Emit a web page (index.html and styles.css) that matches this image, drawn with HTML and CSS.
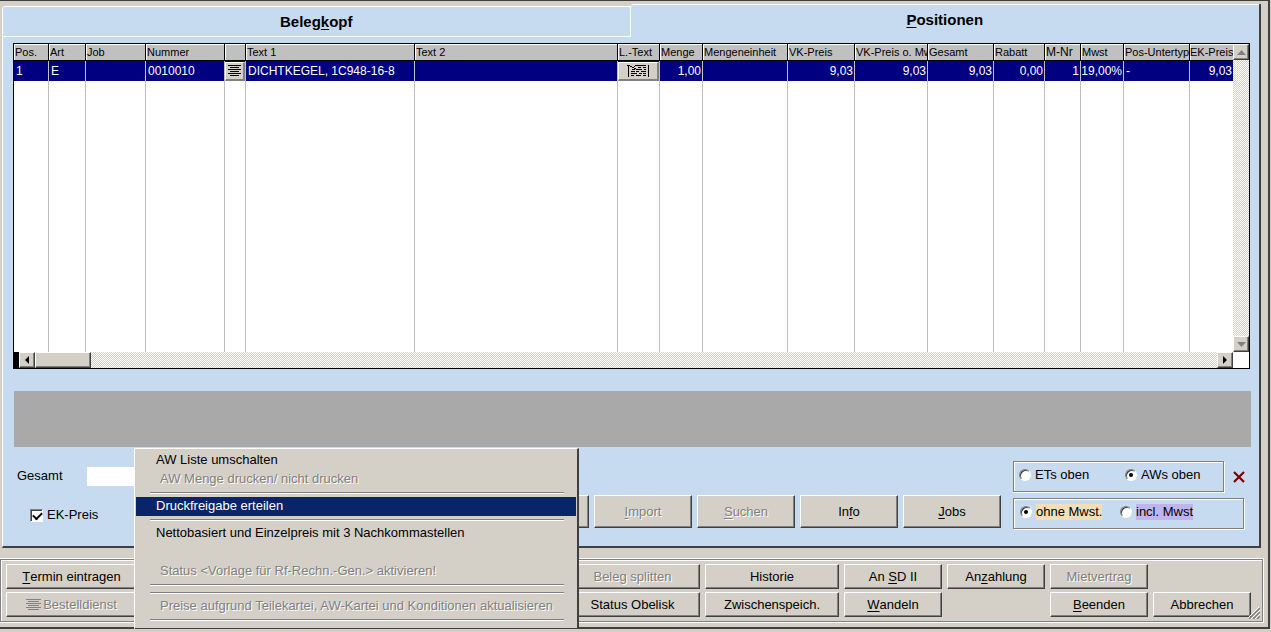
FILE: index.html
```html
<!DOCTYPE html>
<html lang="de">
<head>
<meta charset="utf-8">
<title>Positionen</title>
<link rel="stylesheet" href="styles.css">
</head>
<body>
<main class="window">
  <section class="panel">
    <div class="tabs" role="tablist">
      <button class="tab" role="tab">Beleg<u>k</u>opf</button>
      <button class="tab tab-active" role="tab" aria-selected="true"><u>P</u>ositionen</button>
    </div>
    <div class="panel-body">
      <div class="grid-frame">
        <div class="grid-main">
          <table class="grid">
            <colgroup>
              <col class="w35"><col class="w37"><col class="w60"><col class="w79"><col class="w21"><col class="w169"><col>
              <col class="w42"><col class="w43"><col class="w85"><col class="w67"><col class="w73"><col class="w66">
              <col class="w51"><col class="w36"><col class="w43"><col class="w66"><col class="w43">
            </colgroup>
            <thead>
              <tr><th>Pos.</th><th>Art</th><th>Job</th><th>Nummer</th><th></th><th>Text 1</th><th>Text 2</th><th>L.-Text</th><th>Menge</th><th>Mengeneinheit</th><th>VK-Preis</th><th>VK-Preis o. Mw</th><th>Gesamt</th><th>Rabatt</th><th class="wide">M-Nr</th><th>Mwst</th><th>Pos-Untertyp</th><th>EK-Preis</th></tr>
            </thead>
            <tbody>
              <tr class="selected">
                <td>1</td><td>E</td><td></td><td>0010010</td>
                <td class="icon-cell"><button class="cell-button" aria-label="Text"><svg width="15" height="13" viewBox="0 0 15 13" shape-rendering="crispEdges"><path d="M1 1.5h13M3 3.5h9M1 5.5h13M3 7.5h9M1 9.5h13M3 11.5h9" stroke="#000"/></svg></button></td>
                <td>DICHTKEGEL, 1C948-16-8</td><td></td>
                <td class="icon-cell"><button class="cell-button" aria-label="Langtext"><svg width="24" height="14" viewBox="0 0 24 14" shape-rendering="crispEdges"><path d="M1 1.5h3M2.500 1v12M22.500 1v12M4 2.500h2M6 3.500h2M8 4.500h2M9 1.500h11M8 2.500h1M12 3.500h3M17 3.500h3M6 5.500h3M10 5.500h6M18 5.500h2M5 7.500h4M10 7.500h3M15 7.500h5M5 9.500h6M13 9.500h3M17 9.500h3M5 11.500h3M10 11.500h5M17 11.500h3" stroke="#000"/></svg></button></td>
                <td class="num">1,00</td><td></td><td class="num">9,03</td><td class="num">9,03</td><td class="num">9,03</td><td class="num">0,00</td><td class="num">1</td><td class="num">19,00%</td><td>-</td><td class="num">9,03</td>
              </tr>
              <tr class="blank"><td></td><td></td><td></td><td></td><td></td><td></td><td></td><td></td><td></td><td></td><td></td><td></td><td></td><td></td><td></td><td></td><td></td><td></td></tr>
            </tbody>
          </table>
          <div class="scroll-v">
            <button class="arrow" aria-label="Nach oben"><svg width="9" height="5" viewBox="0 0 9 5"><path d="M0 5L4.500 0L9 5Z" fill="#808080"/></svg></button>
            <button class="arrow" aria-label="Nach unten"><svg width="9" height="5" viewBox="0 0 9 5"><path d="M0 0L4.500 5L9 0Z" fill="#808080"/></svg></button>
          </div>
        </div>
        <div class="scroll-row">
          <span class="split"></span>
          <button class="arrow" aria-label="Nach links"><svg width="4" height="8" viewBox="0 0 4 8"><path d="M4 0L0 4L4 8Z"/></svg></button>
          <span class="thumb"></span>
          <span class="track"></span>
          <button class="arrow" aria-label="Nach rechts"><svg width="4" height="8" viewBox="0 0 4 8"><path d="M0 0L4 4L0 8Z"/></svg></button>
          <span class="corner"></span>
        </div>
      </div>
      <div class="info-bar"></div>
      <div class="controls">
        <div class="totals">
          <div class="total"><label for="gesamt">Gesamt</label><input id="gesamt" class="total-input" type="text"></div>
          <label class="check"><input type="checkbox" checked><span>EK-Preis</span></label>
        </div>
        <div class="actions">
          <button class="button" aria-label="Aktion"></button>
          <button class="button" disabled><u>I</u>mport</button>
          <button class="button" disabled><u>S</u>uchen</button>
          <button class="button">In<u>f</u>o</button>
          <button class="button"><u>J</u>obs</button>
        </div>
        <div class="options">
          <div class="option-row">
            <div class="group group-order">
              <label class="radio"><input type="radio" name="order"><span>ETs oben</span></label>
              <label class="radio"><input type="radio" name="order" checked><span>AWs oben</span></label>
            </div>
            <button class="close" aria-label="Schließen"><svg width="12" height="12" viewBox="0 0 12 12"><path d="M1 1L11 11M11 1L1 11" stroke="#800000" stroke-width="2.200"/></svg></button>
          </div>
          <div class="group group-tax">
            <label class="radio"><input type="radio" name="tax" checked><span class="net">ohne Mwst.</span></label>
            <label class="radio"><input type="radio" name="tax"><span class="gross">incl. Mwst</span></label>
          </div>
        </div>
      </div>
    </div>
  </section>

  <footer class="footer">
    <button class="button c1"><u>T</u>ermin eintragen</button>
    <button class="button c3" disabled>Beleg splitten</button>
    <button class="button c4">Historie</button>
    <button class="button c5">An <u>S</u>D II</button>
    <button class="button c6">An<u>z</u>ahlung</button>
    <button class="button c7" disabled>Mietvertrag</button>
    <button class="button c1" disabled><svg width="15" height="12" viewBox="0 0 15 12" shape-rendering="crispEdges"><path d="M0 .5h15M2 2.500h11M0 4.500h15M2 6.500h11M0 8.500h15M2 10.500h11" stroke="#808080"/></svg><span class="icon-label">Bestelldienst</span></button>
    <button class="button c3">Status Obelisk</button>
    <button class="button c4">Zwischenspeich.</button>
    <button class="button c5"><u>W</u>andeln</button>
    <button class="button c7"><u>B</u>eenden</button>
    <button class="button c8">Abbrechen</button>
    <svg class="grip" width="12" height="12" viewBox="0 0 12 12"><path d="M1 12L12 1M5 12L12 5M9 12L12 9" stroke="#808080" stroke-width="1.500"/><path d="M0 11L11 0M3 12L12 3M7 12L12 7" stroke="#fff"/></svg>
  </footer>

  <div class="menu" role="menu">
    <button class="item" role="menuitem">AW Liste umschalten</button>
    <button class="item" role="menuitem" disabled>AW Menge drucken/ nicht drucken</button>
    <hr class="sep">
    <button class="item item-active" role="menuitem">Druckfreigabe erteilen</button>
    <hr class="sep">
    <button class="item" role="menuitem">Nettobasiert und Einzelpreis mit 3 Nachkommastellen</button>
    <div class="item-gap"></div>
    <button class="item" role="menuitem" disabled>Status &lt;Vorlage für Rf-Rechn.-Gen.&gt; aktivieren!</button>
    <hr class="sep">
    <hr class="sep">
    <button class="item" role="menuitem" disabled>Preise aufgrund Teilekartei, AW-Kartei und Konditionen aktualisieren</button>
    <hr class="sep">
  </div>
</main>
</body>
</html>
```

FILE: styles.css
```css
* { box-sizing: border-box; }

body {
  margin: 0;
  background: #d4d0c8;
  color: #000;
  font: 13px/16px "Liberation Sans", Arial, sans-serif;
}

button, input {
  margin: 0;
  padding: 0;
  border: 0;
  font: inherit;
  color: inherit;
}

svg { display: block; }
u { text-underline-offset: 2px; }

.window {
  position: relative;
  margin-right: 1px;
  padding: 3px 5px 5px 0;
  border: solid #404040;
  border-width: 1px 2px 2px 0;
}

/* Tabs and panel */
.panel { margin: 0 2px 0 2px; border-right: 2px solid #404040; }
.tabs { display: grid; grid-template-columns: 1fr 1fr; align-items: end; height: 33px; }
.tab {
  height: 31px;
  border: 1px solid #fff;
  border-top-left-radius: 3px;
  background: #c6dbef;
  font-size: 15px;
  font-weight: bold;
}
.tab-active { height: 33px; padding-bottom: 2px; border-width: 1px 0 0; }
.panel-body {
  padding: 6px 9px 17px 10px;
  border-left: 1px solid #fff;
  border-bottom: 2px solid #404040;
  background: #c6dbef;
}

/* Data grid */
.grid-frame { border: 1px solid #000; background: #fff; }
.grid-main { display: flex; }
.grid { flex: 1; width: 100%; table-layout: fixed; border-collapse: separate; border-spacing: 0; }
.w21 { width: 21px; } .w35 { width: 35px; } .w36 { width: 36px; } .w37 { width: 37px; }
.w42 { width: 42px; } .w43 { width: 43px; } .w51 { width: 51px; } .w60 { width: 60px; }
.w66 { width: 66px; } .w67 { width: 67px; } .w73 { width: 73px; } .w79 { width: 79px; }
.w85 { width: 85px; } .w169 { width: 169px; }
.grid th {
  height: 17px;
  padding: 0;
  border: solid #000;
  border-width: 0 1px 1px 0;
  background: #c0c0c0;
  box-shadow: inset 1px 1px #fff;
  font-size: 11px;
  font-weight: normal;
  line-height: 16px;
  text-align: left;
  text-indent: 1px;
  white-space: nowrap;
  overflow: hidden;
}
.grid .wide { font-size: 12px; }
.grid th:last-child { border-right: 0; text-indent: 0; }
.grid td {
  height: 20px;
  padding: 0 2px;
  border-right: 1px solid #c0c0c0;
  font-size: 12px;
  line-height: 19px;
  white-space: nowrap;
  overflow: hidden;
}
.grid td:last-child { border-right: 0; }
.grid .selected td { background: #000080; color: #fff; }
.grid .num { padding: 0 1px 0 0; text-align: right; }
.grid .icon-cell { padding: 0; }
.grid .blank td { height: 271px; }
.cell-button {
  display: flex;
  align-items: center;
  justify-content: center;
  width: 100%;
  height: 19px;
  background: #d4d0c8;
  border: solid;
  border-width: 1px 2px 2px 1px;
  border-color: #fff #808080 #808080 #fff;
}

.scroll-v, .track {
  background: repeating-conic-gradient(#fff 0 25%, #d4d0c8 0 50%) 0 0 / 2px 2px;
}
.scroll-v { display: flex; flex-direction: column; justify-content: space-between; width: 16px; }
.scroll-row { display: flex; height: 16px; }
.arrow {
  display: flex;
  align-items: center;
  justify-content: center;
  width: 16px;
  height: 16px;
}
.arrow, .thumb {
  background: #d4d0c8;
  border: 1px solid;
  border-color: #fff #404040 #404040 #fff;
  box-shadow: inset -1px -1px #808080;
}
.split { width: 5px; background: #000; }
.thumb { width: 56px; }
.track { flex: 1; }
.corner { width: 16px; }

.info-bar { height: 56px; margin: 22px -1px 0 1px; background: #a9a9a9; }

/* Controls under the grid */
.controls { display: flex; padding: 14px 4px 0 4px; }
.totals { flex: 1; }
.total { display: flex; align-items: center; height: 30px; }
.total label { width: 70px; }
.total-input { width: 100px; height: 19px; background: #fff; }
.check { display: flex; align-items: center; gap: 4px; margin: 16px 0 0 13px; }
.check input {
  appearance: none;
  width: 13px;
  height: 13px;
  border: 1px solid;
  border-color: #808080 #fff #fff #808080;
  box-shadow: inset 1px 1px #404040;
  background: #fff;
}
.check input:checked::before {
  content: "";
  display: block;
  width: 7px;
  height: 4px;
  margin: 2px;
  border: solid #000;
  border-width: 0 0 2px 2px;
  transform: rotate(-45deg);
}

.actions { display: flex; align-items: flex-end; gap: 5px; margin: 0 12px 1px 0; }
.actions .button { width: 98px; height: 33px; }

.button {
  display: flex;
  align-items: center;
  justify-content: center;
  border: 1px solid;
  border-color: #fff #404040 #404040 #fff;
  box-shadow: inset -1px -1px #808080;
  background: #d4d0c8;
  white-space: pre;
}
.button:disabled, .item:disabled { color: #808080; text-shadow: 1px 1px #fff; }
.icon-label { margin-left: 2px; }

.options { width: 233px; }
.option-row { display: flex; align-items: center; gap: 9px; }
.close { background: none; }
.group {
  display: flex;
  height: 31px;
  padding: 0 5px 3px;
  border: 1px solid #808080;
  box-shadow: 1px 1px #fff, inset 1px 1px #fff;
}
.group-order { width: 211px; }
.group-tax { width: 231px; margin-top: 6px; padding: 0 6px 3px; }
.radio { display: flex; flex: none; align-items: center; gap: 4px; }
.group-order .radio:first-child { width: 106px; }
.group-tax .radio:first-child { width: 100px; }
.radio input {
  appearance: none;
  width: 12px;
  height: 12px;
  border: 1px solid;
  border-color: #808080 #fff #fff #808080;
  border-radius: 50%;
  box-shadow: inset 1px 1px #404040;
  background: #fff;
}
.radio input:checked::before {
  content: "";
  display: block;
  width: 4px;
  height: 4px;
  margin: 3px;
  border-radius: 50%;
  background: #000;
}
.net { background: #f5deb3; }
.gross { background: #c0b4ee; }

/* Bottom button bar */
.footer {
  position: relative;
  display: grid;
  grid-template-columns: 131px 1fr 135px 134px 98px 98px 98px 98px;
  grid-template-rows: 25px 25px;
  gap: 3px 5px;
  margin-top: 11px;
  padding: 4px 11px 4px 5px;
  border: 1px solid #808080;
  outline: 1px solid #fff;
  box-shadow: inset 1px 1px #fff;
}
.c1 { grid-column: 1; } .c3 { grid-column: 3; } .c4 { grid-column: 4; } .c5 { grid-column: 5; }
.c6 { grid-column: 6; } .c7 { grid-column: 7; } .c8 { grid-column: 8; }
.grip { position: absolute; right: 2px; bottom: 2px; }

/* Context menu */
.menu {
  position: absolute;
  left: 134px;
  top: 447px;
  display: flex;
  flex-direction: column;
  width: 445px;
  padding: 2px 1px 4px 1px;
  background: #d4d0c8;
  border: solid;
  border-width: 1px 2px 2px 1px;
  border-color: #fff #404040 #404040 #fff;
}
.item {
  display: block;
  width: 100%;
  height: 19px;
  padding: 0 0 2px 20px;
  background: none;
  text-align: left;
  white-space: nowrap;
}
.item:disabled { padding-left: 24px; }
.item-active { background: #0a246a; color: #fff; }
.item-gap { height: 19px; }
.sep {
  height: 2px;
  margin: 3px 12px 3px 14px;
  border: solid;
  border-width: 1px 0;
  border-color: #808080 transparent #fff;
}
```
